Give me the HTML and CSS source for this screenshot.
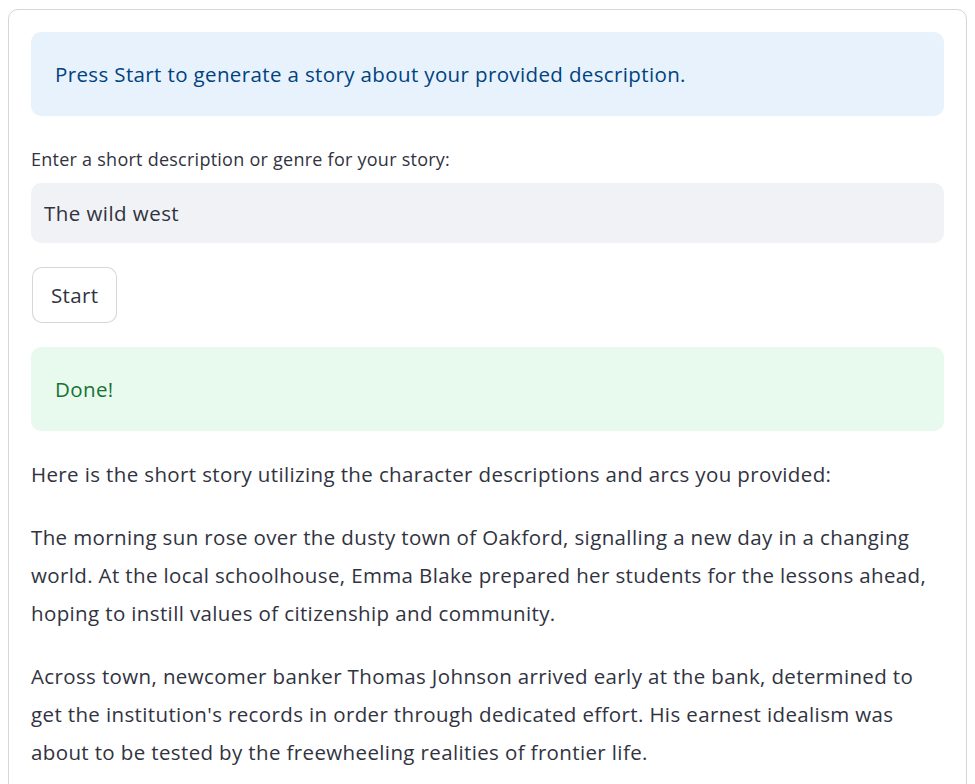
FILE: index.html
```html
<!DOCTYPE html>
<html lang="en">
<head>
<meta charset="utf-8">
<title>Story generator</title>
<link rel="stylesheet" href="styles.css">
</head>
<body>
<main class="card">
  <div class="alert alert-info">Press Start to generate a story about your provided description.</div>
  <div class="field">
    <label class="field-label" for="desc">Enter a short description or genre for your story:</label>
    <input class="field-input" id="desc" type="text" value="The wild west">
  </div>
  <div class="actions">
    <button class="btn" type="button">Start</button>
  </div>
  <div class="alert alert-success">Done!</div>
  <div class="story">
    <p>Here is the short story utilizing the character descriptions and arcs you provided:</p>
    <p>The morning sun rose over the dusty town of Oakford, signalling a new day in a changing world. At the local schoolhouse, Emma Blake prepared her students for the lessons ahead, hoping to instill values of citizenship and community.</p>
    <p>Across town, newcomer banker Thomas Johnson arrived early at the bank, determined to get the institution's records in order through dedicated effort. His earnest idealism was about to be tested by the freewheeling realities of frontier life.</p>
  </div>
</main>
</body>
</html>
```
FILE: styles.css
```css
* { box-sizing: border-box; }
html, body { margin: 0; padding: 0; background: #ffffff; }
body {
  font-family: "Open Sans", Lato, "Liberation Sans", sans-serif;
  color: #31333f;
  padding: 9px 8px 0 8px;
  overflow: hidden;
  height: 784px;
}
.card {
  border: 1px solid rgba(49, 51, 63, 0.2);
  border-radius: 10px;
  padding: 22px 22px 40px 22px;
  display: flex;
  flex-direction: column;
  gap: 24px;
}
.alert {
  border-radius: 10px;
  padding: 26px 24px;
  font-size: 20.5px;
  letter-spacing: 0.37px;
  line-height: 32px;
}
.alert-info { background: #e8f2fc; color: #004280; }
.alert-success { background: #e8f9ee; color: #177233; }
.field { display: flex; flex-direction: column; }
.field-label {
  font-size: 18px;
  letter-spacing: 0.25px;
  line-height: 28px;
  padding: 5px 0 10px 0;
}
.field-input {
  height: 60px;
  border: none;
  border-radius: 10px;
  background: #f0f2f6;
  font-family: inherit;
  font-size: 20.5px;
  letter-spacing: 0.45px;
  color: #31333f;
  padding: 0 13px;
  outline: none;
}
.actions { display: flex; }
.btn {
  font-family: inherit;
  font-size: 20.5px;
  letter-spacing: 0.37px;
  color: #31333f;
  background: #ffffff;
  border: 1px solid rgba(49, 51, 63, 0.2);
  border-radius: 10px;
  height: 56px;
  padding: 0 18px;
  margin-left: 1px;
}
.story p {
  margin: 0 0 25px 0;
  font-size: 20.5px;
  letter-spacing: 0.37px;
  line-height: 38px;
}
```
